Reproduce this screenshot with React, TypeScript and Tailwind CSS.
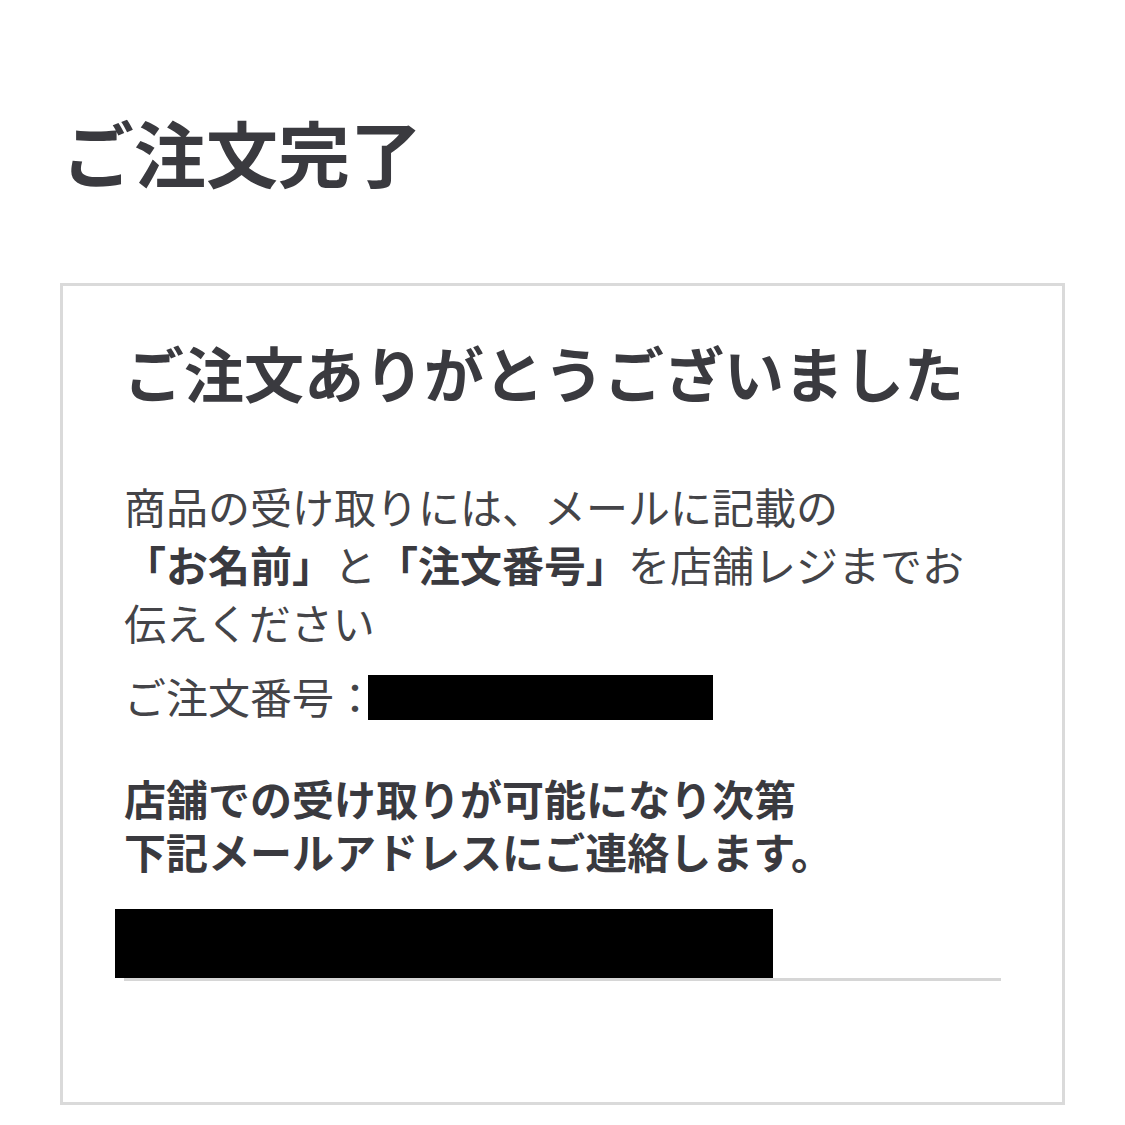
export default function App() {
  return (
    <div
      className="min-h-[1125px] w-[1125px] bg-white text-[#3a3a3f]"
      style={{ fontFamily: '"Noto Sans CJK JP", "Noto Sans", sans-serif' }}
    >
      <h1 className="pl-[62px] pt-[115px] text-[72px] font-bold leading-none">ご注文完了</h1>

      <section className="mx-[60px] mt-[96px] border-[3px] border-[#dadada] px-[61px] pb-[121px] pt-[56px]">
        <h2 className="text-[60px] font-bold leading-none">ご注文ありがとうございました</h2>

        <p className="mt-[75px] text-[42px] leading-[58px] text-[#444448]">
          商品の受け取りには、メールに記載の
          <br />
          <span className="font-bold text-[#3a3a3f]">「お名前」</span>と
          <span className="font-bold text-[#3a3a3f]">「注文番号」</span>
          を店舗レジまでお伝えください
        </p>

        <div className="mt-[16px] flex h-[58px] items-center text-[42px] leading-[58px] text-[#444448]">
          <span>ご注文番号：</span>
          <span className="-ml-[8px] mt-[2px] h-[45px] w-[345px] bg-black" />
        </div>

        <p className="mt-[46px] text-[42px] font-bold leading-[53px]">
          店舗での受け取りが可能になり次第
          <br />
          下記メールアドレスにご連絡します。
        </p>

        <div className="mt-[32px] border-b-[3px] border-[#d6d6d6]">
          <div className="-ml-[9px] h-[69px] w-[658px] bg-black" />
        </div>
      </section>
    </div>
  );
}
